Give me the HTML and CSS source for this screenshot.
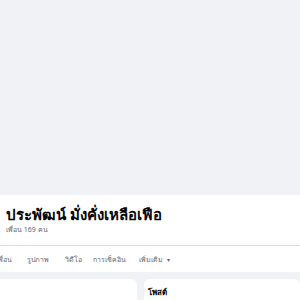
FILE: index.html
```html
<!DOCTYPE html>
<html lang="th">
<head>
  <meta charset="UTF-8" />
  <meta name="viewport" content="width=device-width, initial-scale=1.0" />
  <title>ประพัฒน์ มั่งคั่งเหลือเฟือ</title>
  <link rel="stylesheet" href="styles.css">
</head>
<body>
  <div class="cover"></div>

  <div class="header">
    <div class="intro">
      <h1 class="name">ประพัฒน์ มั่งคั่งเหลือเฟือ</h1>
      <div class="friends">เพื่อน 169 คน</div>
    </div>
    <div class="tabs">
      <span class="tab">เพื่อน</span>
      <span class="tab">รูปภาพ</span>
      <span class="tab">วิดีโอ</span>
      <span class="tab">การเช็คอิน</span>
      <span class="tab">เพิ่มเติม <span class="caret">▾</span></span>
    </div>
  </div>

  <div class="main">
    <div class="card side"></div>
    <div class="card posts">
      <h2>โพสต์</h2>
    </div>
  </div>
</body>
</html>
```

FILE: styles.css
```css
html, body {
  margin: 0;
  padding: 0;
  font-family: "Noto Sans", "Liberation Sans", sans-serif;
  background-color: #f0f2f5;
  height: 100vh;
  overflow: hidden;
}

.cover {
  height: 195px;
  background-color: #f0f2f5;
}

.header {
  background-color: #fff;
}

.intro {
  height: 51px;
  padding: 0 6px;
  border-bottom: 1px solid #dadde1;
  box-sizing: border-box;
}

.name {
  margin: 0;
  padding-top: 8px;
  font-size: 15px;
  line-height: 22px;
  font-weight: bold;
  color: #050505;
}

.friends {
  font-size: 7px;
  line-height: 10px;
  color: #65676b;
}

.tabs {
  height: 26px;
  display: flex;
  align-items: center;
  margin-left: -4px;
  font-size: 7px;
  color: #65676b;
  white-space: nowrap;
}

.tab:nth-child(1) { margin-right: 15px; }
.tab:nth-child(2) { margin-right: 16px; }
.tab:nth-child(3) { margin-right: 11px; }
.tab:nth-child(4) { margin-right: 13px; }

.caret {
  font-size: 6px;
  margin-left: 2px;
}

.main {
  display: grid;
  grid-template-columns: 137px 1fr;
  gap: 7px;
  padding-top: 7px;
}

.card {
  background-color: #fff;
  border-radius: 6px;
  height: 40px;
}

.side {
  border-radius: 0 6px 6px 0;
}

.posts {
  padding: 7px 4px;
}

.posts h2 {
  margin: 0;
  font-size: 8px;
  line-height: 12px;
  font-weight: bold;
  color: #050505;
}
```
